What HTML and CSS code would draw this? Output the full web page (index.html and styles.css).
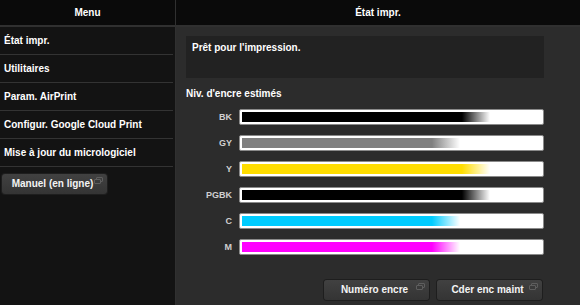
FILE: index.html
```html
<!DOCTYPE html>
<html lang="fr">
<head>
	<meta charset="UTF-8">
	<meta name="viewport" content="width=device-width, initial-scale=1.0">
	<title>État impr.</title>
	<link rel="stylesheet" href="styles.css">
</head>
<body>

	<div class="page">
		<div class="menu">
			<div class="head">Menu</div>
			<div class="item">État impr.</div>
			<div class="item">Utilitaires</div>
			<div class="item">Param. AirPrint</div>
			<div class="item">Configur. Google Cloud Print</div>
			<div class="item">Mise à jour du micrologiciel</div>
			<div class="btn btn-menu">Manuel (en ligne)<span class="win"></span></div>
		</div>

		<div class="main">
			<div class="head">État impr.</div>
			<div class="content">
				<div class="message">Prêt pour l'impression.</div>
				<div class="title">Niv. d'encre estimés</div>

				<div class="inks">
					<div class="ink"><span class="label">BK</span><div class="bar"><div class="fill bk" style="width: 83%"></div></div></div>
					<div class="ink"><span class="label">GY</span><div class="bar"><div class="fill gy" style="width: 73%"></div></div></div>
					<div class="ink"><span class="label">Y</span><div class="bar"><div class="fill y" style="width: 83%"></div></div></div>
					<div class="ink"><span class="label">PGBK</span><div class="bar"><div class="fill bk" style="width: 83%"></div></div></div>
					<div class="ink"><span class="label">C</span><div class="bar"><div class="fill c" style="width: 73%"></div></div></div>
					<div class="ink"><span class="label">M</span><div class="bar"><div class="fill m" style="width: 73%"></div></div></div>
				</div>

				<div class="actions">
					<div class="btn">Numéro encre<span class="win"></span></div>
					<div class="btn">Cder enc maint<span class="win"></span></div>
				</div>
			</div>
		</div>
	</div>

</body>
</html>
```

FILE: styles.css
```css
body {
	margin: 0;
	font-family: "Liberation Sans", Arial, sans-serif;
	font-size: 10px;
	font-weight: bold;
	color: #fff;
	background: #2c2c2c;
}
.page {
	display: flex;
	height: 305px;
	overflow: hidden;
}
.head {
	height: 25px;
	line-height: 25px;
	text-align: center;
	background: #0a0a0a;
	border-bottom: 2px solid #303030;
}

/* linke Spalte */
.menu {
	width: 175px;
	background: #131313;
	border-right: 1px solid #303030;
}
.item {
	height: 27px;
	line-height: 27px;
	padding-left: 4px;
	margin-right: 2px;
	border-bottom: 1px solid #333;
}
.btn {
	position: relative;
	box-sizing: border-box;
	width: 105px;
	height: 20px;
	line-height: 20px;
	padding-right: 4px;
	text-align: center;
	border-radius: 3px;
	background: linear-gradient(#414141, #343434);
	box-shadow: 0 0 0 1px #1e1e1e;
	color: #f4f4f4;
}
.btn-menu {
	margin: 7px 0 0 2px;
}
.win {
	position: absolute;
	top: 3px;
	right: 4px;
	width: 5px;
	height: 3px;
	border: 1px solid #5e5e5e;
	border-radius: 1px;
}
.win::after {
	content: "";
	position: absolute;
	left: -3px;
	top: 1px;
	width: 5px;
	height: 3px;
	border: 1px solid #5e5e5e;
	border-radius: 1px;
	background: #3a3a3a;
}

/* rechte Spalte */
.main {
	flex: 1;
}
.content {
	padding: 9px 0 0 10px;
}
.message {
	width: 352px;
	height: 42px;
	padding-left: 6px;
	line-height: 23px;
	background: #222;
}
.title {
	margin-top: 9px;
	line-height: 13px;
}
.inks {
	display: flex;
	flex-direction: column;
	gap: 10px;
	margin-top: 9px;
}
.ink {
	display: flex;
	align-items: center;
	gap: 7px;
}
.label {
	width: 46px;
	text-align: right;
	font-size: 9px;
	color: #d0d0d0;
}
.bar {
	width: 299px;
	height: 10px;
	padding: 2px;
	background: #fff;
	border: 1px solid #8a8a8a;
	border-radius: 2px;
}
.fill {
	height: 100%;
	background: linear-gradient(to right, var(--ink) calc(100% - 28px), rgba(255, 255, 255, 0));
}
.bk { --ink: #000; }
.gy { --ink: #808080; }
.y { --ink: #ffdd00; }
.c { --ink: #00ccff; }
.m { --ink: #ff00ff; }

.actions {
	display: flex;
	justify-content: flex-end;
	gap: 8px;
	margin: 25px 38px 0 0;
}
```
